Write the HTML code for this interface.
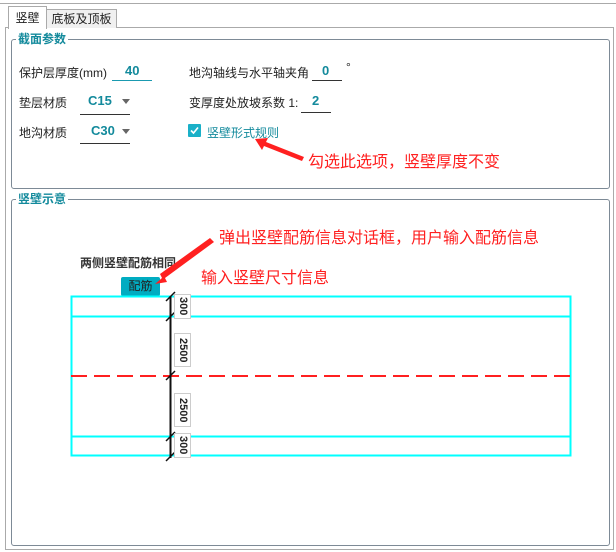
<!DOCTYPE html>
<html><head><meta charset="utf-8"><style>
body{margin:0;width:616px;height:552px;background:#fff;position:relative;overflow:hidden;font-family:"Liberation Sans","Noto Sans CJK SC",sans-serif;font-size:12px;color:#222}
.a{position:absolute;white-space:nowrap}
.u{position:absolute;height:1px;background:#333}
.gb{position:absolute;border:1px solid #7d8a96;border-radius:3px}
.gt{position:absolute;background:#fff;color:#138a9c;padding:0 2px;line-height:14px;font-weight:bold}
.v{color:#138a9c;font-weight:bold;font-size:13px}
.red{color:#ff2020;font-size:16px}
.tri{position:absolute;width:0;height:0;border-left:4px solid transparent;border-right:4px solid transparent;border-top:5px solid #666}
.lb{position:absolute;width:15px;background:#fff;border:1px solid #ccc;font-size:11px;font-weight:bold;writing-mode:vertical-rl;text-align:center;line-height:15px}
</style></head><body>
<div class="a" style="left:0;top:3px;width:616px;height:1px;background:#aaa"></div>
<div class="a" style="left:5px;top:27px;width:607px;height:521px;border:1px solid #aaa"></div>
<div class="a" style="left:46px;top:9px;width:69px;height:18px;background:#f0f0f0;border:1px solid #aaa;border-bottom:none;line-height:18px;text-align:center">底板及顶板</div>
<div class="a" style="left:8px;top:6px;width:37px;height:22px;background:#fff;border:1px solid #aaa;border-bottom:none;line-height:22px;text-align:center">竖壁</div>
<div class="gb" style="left:11px;top:39px;width:597px;height:148px"></div>
<div class="gt" style="left:16px;top:32px">截面参数</div>
<div class="gb" style="left:11px;top:199px;width:597px;height:345px"></div>
<div class="gt" style="left:16px;top:192px">竖壁示意</div>

<div class="a" style="left:19px;top:64px">保护层厚度(mm)</div>
<div class="a v" style="left:125px;top:63px">40</div><div class="u" style="left:112px;top:80px;width:40px;background:#1a9ab0"></div>
<div class="a" style="left:189px;top:64px">地沟轴线与水平轴夹角</div>
<div class="a v" style="left:322px;top:63px">0</div><div class="u" style="left:312px;top:80px;width:30px"></div>
<div class="a" style="left:346px;top:60px">°</div>

<div class="a" style="left:19px;top:94px">垫层材质</div>
<div class="a v" style="left:88px;top:93px">C15</div><div class="tri" style="left:122px;top:99px"></div><div class="u" style="left:80px;top:114px;width:50px"></div>
<div class="a" style="left:189px;top:94px">变厚度处放坡系数 1:</div>
<div class="a v" style="left:312px;top:93px">2</div><div class="u" style="left:301px;top:112px;width:30px"></div>

<div class="a" style="left:19px;top:124px">地沟材质</div>
<div class="a v" style="left:91px;top:123px">C30</div><div class="tri" style="left:122px;top:129px"></div><div class="u" style="left:80px;top:143px;width:50px"></div>
<svg class="a" style="left:188px;top:124px" width="13" height="13"><rect width="13" height="13" rx="1" fill="#1ab0c8"/><path d="M3 6.5 L5.5 9 L10 3.5" stroke="#fff" stroke-width="1.6" fill="none"/></svg>
<div class="a" style="left:207px;top:124px;color:#138a9c">竖壁形式规则</div>
<div class="a red" style="left:308px;top:148px">勾选此选项，竖壁厚度不变</div>

<div class="a" style="left:80px;top:254px;font-weight:bold;color:#333">两侧竖壁配筋相同</div>
<div class="a" style="left:121px;top:277px;width:39px;height:19px;background:#00acc1;border-radius:2px;text-align:center;line-height:19px">配筋</div>
<div class="a red" style="left:219px;top:224px">弹出竖壁配筋信息对话框，用户输入配筋信息</div>
<div class="a red" style="left:201px;top:264px">输入竖壁尺寸信息</div>

<svg class="a" style="left:0;top:0" width="616" height="552">
<rect x="71.5" y="296.5" width="499" height="159" fill="none" stroke="#00ffff" stroke-width="2"/>
<line x1="71" y1="316.5" x2="571" y2="316.5" stroke="#00ffff" stroke-width="2"/>
<line x1="71" y1="436.5" x2="571" y2="436.5" stroke="#00ffff" stroke-width="2"/>
<line x1="71" y1="376" x2="571" y2="376" stroke="#ff2020" stroke-width="2" stroke-dasharray="16,7"/>
<line x1="170.5" y1="296" x2="170.5" y2="458" stroke="#111" stroke-width="2"/>
<g stroke="#111" stroke-width="1.5">
<line x1="166" y1="301" x2="175" y2="292"/><line x1="166" y1="321" x2="175" y2="312"/>
<line x1="166" y1="380" x2="175" y2="371"/><line x1="166" y1="441" x2="175" y2="432"/>
<line x1="166" y1="461" x2="175" y2="452"/></g>
<polygon points="155,284 162,278 160,274 210,238 214,242 165,278 167,282" fill="#ff2020"/>
<polygon points="255,139 268,138 266,142 304,157 302,161 264,146 262,150" fill="#ff2020"/>
</svg>
<div class="lb" style="left:174px;top:294px;height:23px">300</div>
<div class="lb" style="left:174px;top:333px;height:32px">2500</div>
<div class="lb" style="left:174px;top:393px;height:32px">2500</div>
<div class="lb" style="left:174px;top:433px;height:23px">300</div>
</body></html>
